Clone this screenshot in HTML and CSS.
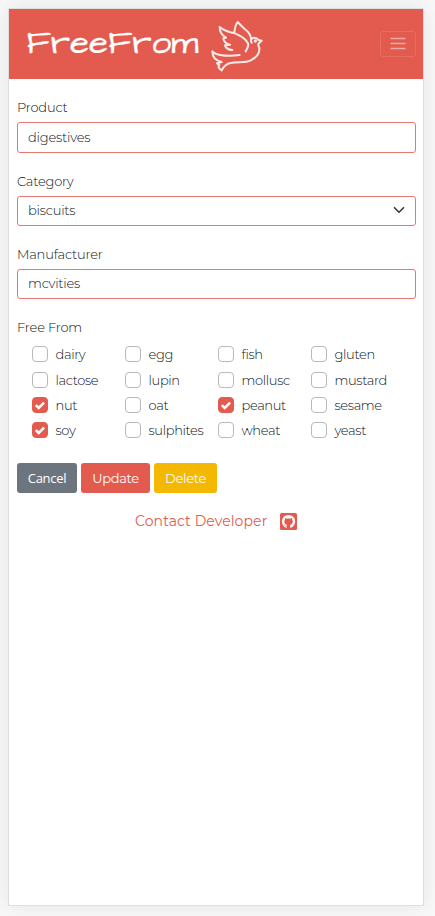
FILE: index.html
```html
<!DOCTYPE html>
<html lang="en">
<head>
<meta charset="utf-8">
<title>FreeFrom</title>
<link rel="stylesheet" href="styles.css">
</head>
<body>
<div class="card">
  <header class="navbar">
    <a class="brand">
      <svg class="wordmark" width="180" height="60" viewBox="0 0 180 60"><text x="0.500" y="38.500" textLength="172" lengthAdjust="spacingAndGlyphs">FreeFrom</text></svg>
      <svg class="dove" width="64" height="64" viewBox="0 0 192 192">
        <path d="M138 82Q138 65 119 51Q107 40 98 30Q89 42 88 64M122 118Q132 103 129 94Q122 78 90 64Q59 58 44 45Q44 66 63 77L55 79Q57 94 75 98L60 100Q64 113 82 114M104 129C62 134 28 129 22 118C22 139 36 147 50 150L36 154L43 159Q36 166 50 175Q59 157 76 153C98 148 121 154 137 145Q165 132 163 108Q158 98 162 93L170 86L161 84Q151 73 140 80Q136 87 140 92"/>
        <circle cx="151" cy="87" r="2"/>
      </svg>
    </a>
    <button class="toggler" aria-label="Menu"><svg width="20" height="20" viewBox="0 0 20 20"><path d="M2.500 4.500h15M2.500 9.500h15M2.500 14.500h15"/></svg></button>
  </header>
  <form class="form">
    <div class="field first"><label class="label">Product</label><input class="control" type="text" value="digestives"></div>
    <div class="field"><label class="label">Category</label><div class="control select"><span>biscuits</span><svg width="12" height="12" viewBox="0 0 16 16"><path d="M2 5l6 6 6-6"/></svg></div></div>
    <div class="field"><label class="label">Manufacturer</label><input class="control" type="text" value="mcvities"></div>
    <div class="label">Free From</div>
    <div class="checks">
      <label><input type="checkbox"><span>dairy</span></label>
      <label><input type="checkbox"><span>egg</span></label>
      <label><input type="checkbox"><span>fish</span></label>
      <label><input type="checkbox"><span>gluten</span></label>
      <label><input type="checkbox"><span>lactose</span></label>
      <label><input type="checkbox"><span>lupin</span></label>
      <label><input type="checkbox"><span>mollusc</span></label>
      <label><input type="checkbox"><span>mustard</span></label>
      <label><input type="checkbox" checked><span>nut</span></label>
      <label><input type="checkbox"><span>oat</span></label>
      <label><input type="checkbox" checked><span>peanut</span></label>
      <label><input type="checkbox"><span>sesame</span></label>
      <label><input type="checkbox" checked><span>soy</span></label>
      <label><input type="checkbox"><span>sulphites</span></label>
      <label><input type="checkbox"><span>wheat</span></label>
      <label><input type="checkbox"><span>yeast</span></label>
    </div>
    <div class="buttons">
      <button type="button" class="btn cancel">Cancel</button>
      <button type="button" class="btn update">Update</button>
      <button type="button" class="btn delete">Delete</button>
    </div>
  </form>
  <footer class="footer">
    <span class="contact">Contact Developer</span>
    <svg class="github" width="17" height="17" viewBox="0 0 17 17">
      <rect width="17" height="17" rx="1.500" fill="#e35b4f"/>
      <circle cx="8.500" cy="8.500" r="6.600" fill="#fff"/>
      <path fill="#e35b4f" d="M6.700 15.500v-2.100c-1.700.3-2.100-.7-2.600-1.300l-.6-.5c.9-.2 1.400.4 1.700.8.500.6 1 .6 1.600.4.100-.5.300-.8.500-.9-2.100-.3-3-1.400-3-3.300 0-.8.300-1.400.7-1.900-.2-.6-.1-1.300.1-1.800.7 0 1.300.4 1.800.8 1.100-.3 2.200-.3 3.300 0 .5-.4 1.100-.8 1.800-.8.200.5.300 1.200.1 1.800.4.500.7 1.100.7 1.900 0 1.900-1 3-3 3.300.3.300.5.700.5 1.300v2.300z"/>
    </svg>
  </footer>
</div>
</body>
</html>
```
FILE: styles.css
```css
* { box-sizing: border-box; }
body {
  margin: 0;
  padding: 8px 0 0 8px;
  height: 916px;
  overflow: hidden;
  background: #f8f8f8;
  font-family: Montserrat, Inter, sans-serif;
  font-weight: 300;
  font-size: 13px;
  letter-spacing: -.2px;
  color: #0c1014;
}
.card {
  width: 416px;
  height: 898px;
  background: #fff;
  border: 1px solid #dedede;
  box-shadow: 0 0 20px rgba(0, 0, 0, .08);
}
.navbar {
  height: 70px;
  padding: 0 7px 0 17px;
  background: #e35b4f;
  display: flex;
  align-items: center;
  justify-content: space-between;
}
.brand { display: flex; align-items: center; }
.wordmark text {
  font-family: "Architects Daughter", Inter, sans-serif;
  font-size: 34px;
  font-weight: 400;
  letter-spacing: 0;
  fill: #fff;
  stroke: #fff;
  stroke-width: .3;
}
.dove {
  margin: 0 0 0 -1px;
  fill: none;
  stroke: #fdeae8;
  stroke-width: 6;
  stroke-linejoin: round;
  stroke-linecap: round;
}
.toggler {
  width: 36px;
  height: 26px;
  padding: 0;
  display: flex;
  align-items: center;
  justify-content: center;
  background: none;
  border: 1px solid #e66d62;
  border-radius: 3px;
}
.toggler svg { fill: none; stroke: #f0aaa4; stroke-width: 1.400; }
.form { padding: 18px 7px 0; }
.field { height: 73px; }
.field.first { height: 74px; }
.first .control { height: 31px; }
.label {
  display: block;
  height: 25px;
  line-height: 20px;
  width: max-content;
  margin-left: 1px;
}
.control {
  display: block;
  width: 399px;
  height: 30px;
  margin: 0 0 0 1px;
  padding: 0 10px 2px;
  border: 1px solid #e8786e;
  border-radius: 3px;
  background: #fff;
  color: inherit;
  font: inherit;
  letter-spacing: inherit;
  outline: none;
}
.select {
  display: flex;
  align-items: center;
  justify-content: space-between;
}
.select svg {
  fill: none;
  stroke: #343a40;
  stroke-width: 2.200;
  stroke-linecap: round;
  stroke-linejoin: round;
}
.checks {
  display: grid;
  grid-template-columns: repeat(4, 93px);
  grid-template-rows: 26px 25px 25px 25px;
  margin: -1px 0 0 16px;
  letter-spacing: -.35px;
}
.checks label {
  display: flex;
  align-items: center;
  gap: 7.500px;
}
.checks input {
  appearance: none;
  flex: none;
  width: 16px;
  height: 16px;
  margin: 0;
  border: 1px solid #b9b9b9;
  border-radius: 4px;
}
.checks input:checked {
  border-color: #e35b4f;
  background: #e35b4f url("data:image/svg+xml,%3Csvg xmlns='http://www.w3.org/2000/svg' viewBox='0 0 14 14'%3E%3Cpath d='M2.800 7.200l2.900 2.800 5.400-5.400' fill='none' stroke='white' stroke-width='2.500'/%3E%3C/svg%3E") center / 14px 14px;
}
.buttons { display: flex; gap: 4px; margin: 21px 0 0 1px; }
.btn {
  height: 30px;
  padding: 0 0 1px;
  border: 0;
  border-radius: 3px;
  font: inherit;
  font-weight: 400;
  letter-spacing: -.3px;
  color: #fff;
}
.cancel { width: 60px; background: #6c757d; font-family: "Open Sans", sans-serif; }
.update { width: 69px; background: #e35b4f; }
.delete { width: 63px; background: #f5b800; }
.footer {
  display: flex;
  align-items: center;
  height: 20px;
  margin: 18px 0 0 126px;
  color: #e35b4f;
  font-size: 14px;
  font-weight: 450;
  letter-spacing: .1px;
}
.contact { width: 145px; white-space: nowrap; }
```
